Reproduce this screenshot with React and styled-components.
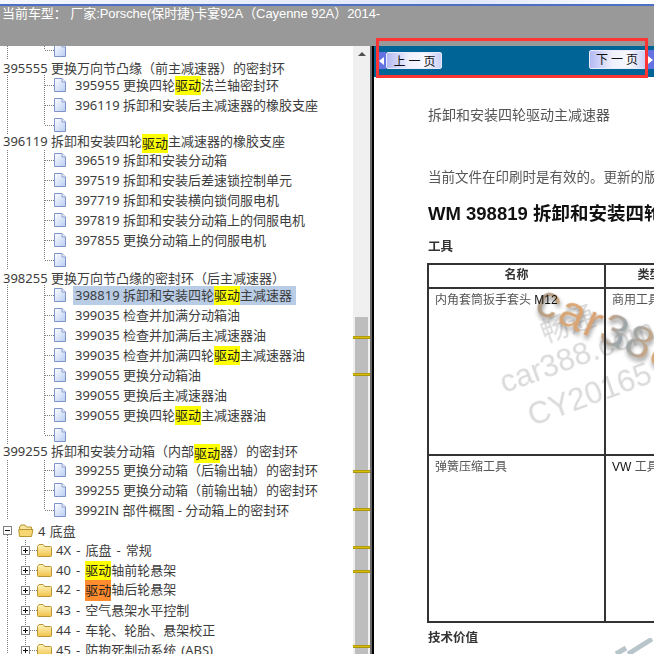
import React from "react";
import styled, { createGlobalStyle } from "styled-components";
import { Fragment } from "react";

const GlobalStyle = createGlobalStyle`
  html, body { margin: 0; padding: 0; background: #fff; }
  body { width: 654px; height: 654px; overflow: hidden; font-family: "Noto Sans", "Noto Sans CJK SC", sans-serif; }
`;

const Page = styled.div`
  width: 654px;
  height: 654px;
  position: relative;
  display: flex;
  flex-direction: column;
  overflow: hidden;
`;

const TopEdge = styled.div`
  height: 6px;
  flex: none;
  box-sizing: border-box;
  background: linear-gradient(90deg, #f4f6fd 0%, #dfe6f8 70%, #ffffff 100%);
  border-bottom: 2px solid #4c70c4;
`;

const CarBar = styled.div`
  height: 40px;
  flex: none;
  box-sizing: border-box;
  padding: 0 0 0 2px;
  background: #999999;
  color: #fff;
  font: 13px/16px "Liberation Sans", "Noto Sans CJK SC", sans-serif;
  letter-spacing: -0.06px;
  white-space: nowrap;
`;

const Main = styled.div`
  flex: 1;
  display: flex;
  min-height: 0;
`;

const TreePane = styled.div`
  width: 353px;
  flex: none;
  overflow: hidden;
`;

const TreeList = styled.div`
  margin-top: -6px;
  font-size: 13px;
  color: #3d3d3d;
  white-space: nowrap;
`;

const dotsV = (x) =>
  `repeating-linear-gradient(180deg, #7a7a7a 0 1px, transparent 1px 2px) ${x}px 0 / 1px 100% no-repeat`;

const GroupRow = styled.div`
  height: 15px;
  box-sizing: border-box;
  line-height: 15px;
  padding: 2px 0 0 3px;
  display: flex;
  align-items: center;
`;

const LeafRow = styled.div`
  height: 20px;
  display: flex;
  align-items: center;
  padding-left: 44px;
  background: ${dotsV(7)};
`;

const Connector = styled.span`
  flex: none;
  align-self: stretch;
  width: 10px;
  background:
    repeating-linear-gradient(90deg, #7a7a7a 0 1px, transparent 1px 2px) 1px 10px / 9px 1px no-repeat,
    repeating-linear-gradient(180deg, #7a7a7a 0 1px, transparent 1px 2px) 0 0 / 1px ${(p) => (p.$last ? "10px" : "100%")} no-repeat;
`;

const RowText = styled.span`
  line-height: 19px;
  height: 19px;
  display: inline-block;
  padding: 0 ${(p) => (p.$selected ? "4px" : "0")} 0 2px;
  background: ${(p) => (p.$selected ? "#b8cce6" : "transparent")};
`;

const LeafText = styled(RowText)`
  margin-left: 7px;
`;

const Mark = styled.span`
  display: inline-block;
  height: ${(p) => (p.$tall ? "21px" : "19px")};
  line-height: ${(p) => (p.$tall ? "21px" : "19px")};
  vertical-align: top;
  color: #1c1c1c;
  background: ${(p) => (p.$orange ? "#ff8c2e" : "#ffff00")};
`;

const RootRow = styled.div`
  height: 20px;
  display: flex;
  align-items: center;
  padding-left: 3px;
  background: ${dotsV(7)};
  background-position-y: 15px;
`;

const RootLabel = styled.span`
  margin-left: 4px;
  word-spacing: 1px;
`;

const FolderRow = styled.div`
  height: 20px;
  display: flex;
  align-items: center;
  padding-left: 21px;
  background: ${dotsV(7)}, ${dotsV(25)};
`;

const FolderDots = styled.span`
  flex: none;
  width: 7px;
  height: 1px;
  background: repeating-linear-gradient(90deg, #7a7a7a 0 1px, transparent 1px 2px);
`;

const FolderText = styled.span`
  margin-left: 4px;
  line-height: 19px;
  word-spacing: 1.7px;
`;

const ExpandBox = styled.span`
  flex: none;
  width: 9px;
  height: 9px;
  box-sizing: border-box;
  border: 1px solid #808080;
  background: #fff;
  position: relative;
  &::before {
    content: "";
    position: absolute;
    left: 1px;
    right: 1px;
    top: 3px;
    height: 1px;
    background: #111;
  }
  &::after {
    content: "";
    display: ${(p) => (p.$open ? "none" : "block")};
    position: absolute;
    top: 1px;
    bottom: 1px;
    left: 3px;
    width: 1px;
    background: #111;
  }
`;

const ScrollTrack = styled.div`
  width: 17px;
  flex: none;
  background: #f0f0f0;
  position: relative;
`;

const ScrollUp = styled.div`
  margin: 6px auto 0;
  width: 0;
  height: 0;
  border-left: 4px solid transparent;
  border-right: 4px solid transparent;
  border-bottom: 4px solid #505050;
`;

const ScrollThumb = styled.div`
  position: absolute;
  left: 2px;
  right: 2px;
  top: 271px;
  bottom: 0;
  background: #bdbdbd;
`;

const ScrollTick = styled.div`
  position: absolute;
  left: 0;
  right: 0;
  height: 3px;
  box-sizing: border-box;
  background: #d8bd00;
  border-top: 1px solid #b09a10;
  border-bottom: 1px solid #a89410;
`;

const Divider = styled.div`
  width: 4px;
  flex: none;
  box-sizing: border-box;
  background: #000;
  border-left: 2px solid #6a6a6a;
`;

const DocPane = styled.div`
  flex: 1;
  min-width: 0;
  position: relative;
  overflow: hidden;
  background: #fff;
`;

const NavBar = styled.div`
  height: 27px;
  display: flex;
  align-items: flex-start;
  justify-content: space-between;
  background: #006496;
  border-bottom: 1px solid #fff;
  padding: 4px 0 0 4px;
`;

const NavButtonWrap = styled.div`
  display: flex;
  align-items: stretch;
  margin-top: ${(p) => (p.$next ? "0" : "2px")};
  height: ${(p) => (p.$next ? "19px" : "17px")};
`;

const NavArrow = styled.span`
  flex: none;
  width: 8px;
  background: #6472e2;
  display: flex;
  align-items: center;
  justify-content: center;
`;

const NavButton = styled.button`
  border: 1px solid #e8ebfb;
  border-radius: 2px;
  padding: 0 0 2px ${(p) => (p.$next ? "2px" : "4px")};
  width: ${(p) => (p.$next ? "57px" : "56px")};
  background: linear-gradient(90deg, #b4b9f2 0%, #eef0fd 40%, #f8f8ff 70%, #ccd0f6 100%);
  color: #111;
  font: 12px/15px "Noto Sans CJK SC", sans-serif;
  letter-spacing: 3px;
`;

const DocBody = styled.div`
  position: relative;
  padding: 27px 0 0 54px;
  width: 520px;
  filter: blur(0.45px);
  color: #555;
  font-family: "Liberation Sans", "Noto Sans CJK SC", sans-serif;
`;

const DocTitle = styled.div`
  font-size: 14px;
  line-height: 20px;
  height: 20px;
`;

const DocNote = styled.div`
  margin-top: 43px;
  font-size: 13.5px;
  line-height: 20px;
  height: 20px;
  white-space: nowrap;
`;

const DocHeading = styled.h1`
  margin: 14px 0 0;
  color: #111;
  font-size: 18.5px;
  font-weight: 700;
  line-height: 24px;
  white-space: nowrap;
`;

const SectionLabel = styled.h3`
  margin: ${(p) => (p.$tools ? "11px" : "5px")} 0 0;
  color: #333;
  font-size: 12.5px;
  font-weight: 700;
  line-height: 20px;
`;

const ToolTable = styled.table`
  margin: 6px 0 0 -1px;
  border-collapse: collapse;
  table-layout: fixed;
  width: 266px;
  border: 2px solid #333;
  td, th {
    border: 2px solid #333;
    padding: 0;
    vertical-align: top;
  }
`;

const HeadCell = styled.th`
  height: 22px;
  color: #333;
  font-size: 12px;
  line-height: 20px;
  font-weight: 700;
  vertical-align: middle;
`;

const BodyCell = styled.td`
  height: 163px;
  font-size: 12px;
  line-height: 18px;
  padding: 2px 0 0 6px !important;
  white-space: nowrap;
`;

const LatinInk = styled.span`
  color: #111;
`;

const Watermark = styled.div`
  position: absolute;
  white-space: nowrap;
  font-family: "Liberation Sans", "Noto Sans CJK SC", sans-serif;
  left: ${(p) => p.$x}px;
  top: ${(p) => p.$y}px;
  font-size: ${(p) => p.$size}px;
  color: #dadada;
  transform: rotate(${(p) => p.$deg}deg);
  transform-origin: 0 50%;
  filter: blur(0.5px);
`;

const LogoMark = styled(Watermark)`
  letter-spacing: 2px;
  background: linear-gradient(90deg, #a89a8a 0%, #dba672 22%, #d8a276 42%, #93a6b2 62%, #dba672 85%);
  -webkit-background-clip: text;
  background-clip: text;
  color: transparent;
  filter: drop-shadow(2px 3px 2px rgba(80, 80, 80, 0.6)) blur(0.4px);
`;

const Streak = styled.svg`
  position: absolute;
  right: 0;
  bottom: 0;
  filter: blur(0.5px);
`;

const RedFrame = styled.div`
  position: absolute;
  left: 376px;
  top: 38px;
  width: 272px;
  height: 40px;
  box-sizing: border-box;
  border: 3px solid #ff3434;
`;

function DocIcon() {
  return (
    <svg width="12" height="14" viewBox="0 0 12 14" style={{ flex: "none" }}>
      <defs>
        <linearGradient id="pg" x1="0" y1="0" x2="1" y2="1">
          <stop offset="0" stopColor="#ffffff" />
          <stop offset="1" stopColor="#b8cdf2" />
        </linearGradient>
      </defs>
      <path d="M.5.5H8L11.5 4V13.5H.5Z" fill="url(#pg)" stroke="#7f93c8" />
      <path d="M8 .5V4H11.5" fill="#e9eefb" stroke="#8ea0cf" />
    </svg>
  );
}

function FolderIcon() {
  return (
    <svg width="15" height="14" viewBox="0 0 15 14" style={{ flex: "none" }}>
      <defs>
        <linearGradient id="fg" x1="0" y1="0" x2="0" y2="1">
          <stop offset="0" stopColor="#fff6c0" />
          <stop offset="1" stopColor="#f0c24a" />
        </linearGradient>
      </defs>
      <path d="M.5 3.5L2 1.5H6L7.5 3.5H13.5Q14.5 3.5 14.5 4.5V12.5Q14.5 13.5 13.5 13.5H1.5Q.5 13.5 .5 12.5Z" fill="url(#fg)" stroke="#b9962e" />
    </svg>
  );
}

function OpenFolderIcon() {
  return (
    <svg width="16" height="15" viewBox="0 0 16 15" style={{ flex: "none", marginLeft: 6 }}>
      <path d="M1.5 4L3 2H7L8.5 4H13.5V7H4L1.5 12Z" fill="#f7e6a0" stroke="#b9962e" />
      <path d="M.7 6.5H15L13.5 13.5H1.5Z" fill="#f6d774" stroke="#b9962e" />
    </svg>
  );
}

const hl = (text, orange) => {
  // 驱动 is the search hit in every title
  const parts = text.split("驱动");
  if (parts.length < 2) return text;
  return (
    <>
      {parts[0]}
      <Mark $orange={orange} $tall={orange}>驱动</Mark>
      {parts[1]}
    </>
  );
};

const sections = [
  { leaves: [{ text: "" }] },
  {
    title: "395555 更换万向节凸缘（前主减速器）的密封环",
    leaves: [
      { text: "395955 更换四轮驱动法兰轴密封环" },
      { text: "396119 拆卸和安装后主减速器的橡胶支座" },
      { text: "" },
    ],
  },
  {
    title: "396119 拆卸和安装四轮驱动主减速器的橡胶支座",
    leaves: [
      { text: "396519 拆卸和安装分动箱" },
      { text: "397519 拆卸和安装后差速锁控制单元" },
      { text: "397719 拆卸和安装横向锁伺服电机" },
      { text: "397819 拆卸和安装分动箱上的伺服电机" },
      { text: "397855 更换分动箱上的伺服电机" },
      { text: "" },
    ],
  },
  {
    title: "398255 更换万向节凸缘的密封环（后主减速器）",
    leaves: [
      { text: "398819 拆卸和安装四轮驱动主减速器", selected: true },
      { text: "399035 检查并加满分动箱油" },
      { text: "399035 检查并加满后主减速器油" },
      { text: "399035 检查并加满四轮驱动主减速器油" },
      { text: "399055 更换分动箱油" },
      { text: "399055 更换后主减速器油" },
      { text: "399055 更换四轮驱动主减速器油" },
      { text: "" },
    ],
  },
  {
    title: "399255 拆卸和安装分动箱（内部驱动器）的密封环",
    leaves: [
      { text: "399255 更换分动箱（后输出轴）的密封环" },
      { text: "399255 更换分动箱（前输出轴）的密封环" },
      { text: "3992IN 部件概图 - 分动箱上的密封环" },
    ],
  },
];

const folders = [
  { text: "4X - 底盘 - 常规" },
  { text: "40 - 驱动轴前轮悬架" },
  { text: "42 - 驱动轴后轮悬架", orange: true },
  { text: "43 - 空气悬架水平控制" },
  { text: "44 - 车轮、轮胎、悬架校正" },
  { text: "45 - 防抱死制动系统 (ABS)" },
];

const ticks = [290, 327, 424, 462, 500, 524, 599];

export default function App() {
  return (
    <Page>
      <GlobalStyle />
      <TopEdge />
      <CarBar>当前车型： 厂家:Porsche(保时捷)卡宴92A（Cayenne 92A）2014-</CarBar>
      <Main>
        <TreePane>
          <TreeList>
            {sections.map((section, i) => (
              <Fragment key={i}>
                {section.title && <GroupRow><span>{hl(section.title)}</span></GroupRow>}
                {section.leaves.map((leaf, j) => (
                  <LeafRow key={j}>
                    <Connector $last={j === section.leaves.length - 1} />
                    <DocIcon />
                    <LeafText $selected={leaf.selected}>{hl(leaf.text)}</LeafText>
                  </LeafRow>
                ))}
              </Fragment>
            ))}
            <RootRow>
              <ExpandBox $open />
              <OpenFolderIcon />
              <RootLabel>4 底盘</RootLabel>
            </RootRow>
            {folders.map((folder) => (
              <FolderRow key={folder.text}>
                <ExpandBox />
                <FolderDots />
                <FolderIcon />
                <FolderText>{hl(folder.text, folder.orange)}</FolderText>
              </FolderRow>
            ))}
          </TreeList>
        </TreePane>
        <ScrollTrack>
          <ScrollUp />
          <ScrollThumb />
          {ticks.map((t) => (
            <ScrollTick key={t} style={{ top: t }} />
          ))}
        </ScrollTrack>
        <Divider />
        <DocPane>
          <NavBar>
            <NavButtonWrap>
              <NavArrow>
                <svg width="6" height="8" viewBox="0 0 6 8"><path d="M0 4L5 0V8Z" fill="#fff" /></svg>
              </NavArrow>
              <NavButton>上一页</NavButton>
            </NavButtonWrap>
            <NavButtonWrap $next>
              <NavButton $next>下一页</NavButton>
              <NavArrow>
                <svg width="6" height="8" viewBox="0 0 6 8"><path d="M6 4L1 0V8Z" fill="#fff" /></svg>
              </NavArrow>
            </NavButtonWrap>
          </NavBar>
          <Watermark $x={167} $y={266} $size={28} $deg={-20}>畅通</Watermark>
          <Watermark $x={127} $y={320} $size={31} $deg={-20}>car388.com</Watermark>
          <Watermark $x={155} $y={353} $size={31} $deg={-20}>CY20165</Watermark>
          <LogoMark $x={165} $y={224} $size={46} $deg={24}>car388</LogoMark>
          <Streak width="40" height="16" viewBox="0 0 40 16">
            <path d="M2 16L12 10M14 16L38 1" stroke="#b8c6cc" strokeWidth="5" fill="none" />
          </Streak>
          <DocBody>
            <DocTitle>拆卸和安装四轮驱动主减速器</DocTitle>
            <DocNote>当前文件在印刷时是有效的。更新的版本可以通过网站查询</DocNote>
            <DocHeading>WM 398819 拆卸和安装四轮驱动主减速器</DocHeading>
            <SectionLabel $tools>工具</SectionLabel>
            <ToolTable>
              <colgroup>
                <col style={{ width: 177 }} />
                <col style={{ width: 89 }} />
              </colgroup>
              <thead>
                <tr>
                  <HeadCell>名称</HeadCell>
                  <HeadCell>类型</HeadCell>
                </tr>
              </thead>
              <tbody>
                <tr>
                  <BodyCell>内角套筒扳手套头 <LatinInk>M12</LatinInk></BodyCell>
                  <BodyCell>商用工具</BodyCell>
                </tr>
                <tr>
                  <BodyCell>弹簧压缩工具</BodyCell>
                  <BodyCell><LatinInk>VW</LatinInk> 工具</BodyCell>
                </tr>
              </tbody>
            </ToolTable>
            <SectionLabel>技术价值</SectionLabel>
          </DocBody>
        </DocPane>
      </Main>
      <RedFrame />
    </Page>
  );
}
